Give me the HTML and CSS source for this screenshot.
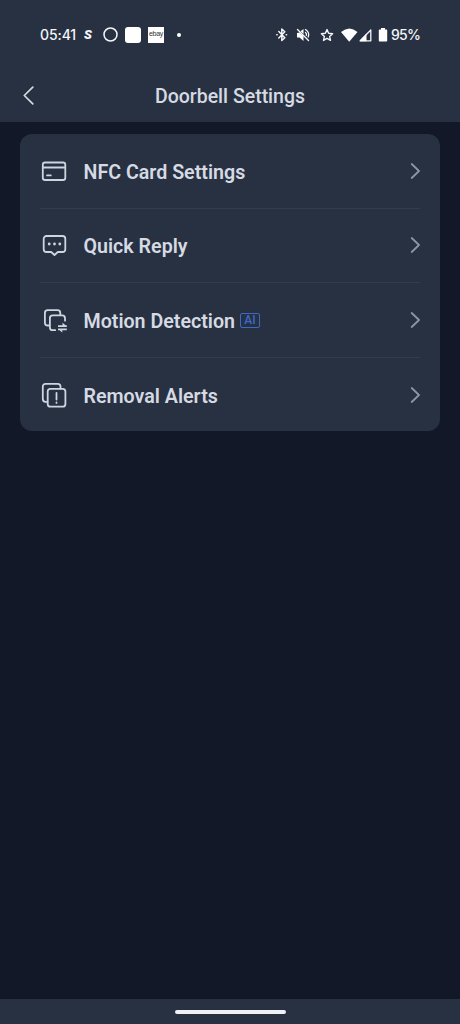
FILE: index.html
```html
<!DOCTYPE html>
<html lang="en">
<head>
<meta charset="utf-8">
<title>Doorbell Settings</title>
<link rel="stylesheet" href="styles.css">
</head>
<body>
<div class="screen">
  <header class="top">
    <div class="status">
      <span class="clock">05:41</span>
      <span class="letter">S</span>
      <svg class="ring" width="15" height="15" viewBox="0 0 15 15"><circle cx="7.5" cy="7.5" r="6.5" stroke-width="1.5"/></svg>
      <span class="tile"></span>
      <span class="tile ebay">ebay</span>
      <span class="dot"></span>
      <svg class="sys" width="110" height="18" viewBox="0 0 110 18">
        <path d="M3.800 5.500l6 6.200-3 2.800V3l3 2.800-6 6.200M1.800 8.800h.4M11.200 8.800h.4" stroke-width="1.500"/>
        <path d="M22.500 3.500l11 11" stroke-width="1.400"/>
        <path class="solid" d="M22 7v4.500h2.500l4 3.500v-5L24.500 6.500zM25.500 5.300l3-2.300v5z"/>
        <path d="M30.500 6.500q1.300 1 .9 2.800M30.500 3.500q4.500 3 2.700 7.500" stroke-width="1.300"/>
        <path d="M52 3.600l1.600 3.700 4 .4-3 2.700.9 4-3.500-2.100-3.500 2.100.9-4-3-2.700 4-.4z" stroke-width="1.400"/>
        <path class="solid" d="M66 6q8.500-7 16.500 0L74.200 15.800z"/>
        <path d="M85.200 14.800H95.800V4z" stroke-width="1.300"/>
        <path class="solid" d="M84.500 15.300h7V7.500z"/>
        <path class="solid" d="M103.800 4.200q0-.7.700-.7h1.500V2h4v1.500h1.500q.7 0 .7.700v10.600q0 .7-.7.700h-7q-.7 0-.7-.7z"/>
      </svg>
      <span class="percent">95%</span>
    </div>
    <div class="nav">
      <svg class="back" width="12" height="20" viewBox="0 0 12 20"><path d="M10.800 1.200L2.300 9.500l8.500 8.300"/></svg>
      <h1>Doorbell Settings</h1>
    </div>
  </header>
  <main class="card">
    <div class="row">
      <svg class="icon" width="28" height="28" viewBox="0 0 28 28"><rect x="2.800" y="5.500" width="22.500" height="17.500" rx="2.300"/><path d="M3 10.500h22M7 18.400h3.800"/></svg>
      <span class="label">NFC Card Settings</span>
      <svg class="chev" width="12" height="18" viewBox="0 0 12 18"><path d="M3.700 2l7.300 7-7.300 7"/></svg>
    </div>
    <div class="row">
      <svg class="icon" width="28" height="28" viewBox="0 0 28 28"><path d="M6.500 5h16a2.800 2.800 0 0 1 2.800 2.800v10.400a2.800 2.800 0 0 1-2.800 2.800h-4.700l-3.300 3-3.300-3H6.500a2.800 2.800 0 0 1-2.800-2.800V7.800A2.800 2.800 0 0 1 6.500 5z"/><g class="fill"><circle cx="9.200" cy="13" r="1.400"/><circle cx="14.500" cy="13" r="1.400"/><circle cx="19.800" cy="13" r="1.400"/></g></svg>
      <span class="label">Quick Reply</span>
      <svg class="chev" width="12" height="18" viewBox="0 0 12 18"><path d="M3.700 2l7.300 7-7.300 7"/></svg>
    </div>
    <div class="row">
      <svg class="icon" width="28" height="28" viewBox="0 0 28 28"><path d="M9.500 19.500H7.700a2.800 2.800 0 0 1-2.800-2.800V7a2.800 2.800 0 0 1 2.800-2.800h9.800a2.800 2.800 0 0 1 2.800 2.800v2M15.200 24.200h-2.500a2.800 2.800 0 0 1-2.800-2.800V12.200a2.800 2.800 0 0 1 2.800-2.800h9.500a2.800 2.800 0 0 1 2.800 2.800v2.500"/><path class="fill" d="M18 19.200h8.800v1.700H18zM22.500 16.800l4 3.300h-4zM18 22.500h8.800v1.700H18zM18.300 23.200h4v3.300z"/></svg>
      <span class="label">Motion Detection</span><span class="ai">AI</span>
      <svg class="chev" width="12" height="18" viewBox="0 0 12 18"><path d="M3.700 2l7.300 7-7.300 7"/></svg>
    </div>
    <div class="row">
      <svg class="icon" width="28" height="28" viewBox="0 0 28 28"><path d="M7.500 20.800H5.500a2.700 2.700 0 0 1-2.700-2.700V5.600a2.700 2.700 0 0 1 2.700-2.700h12.300a2.700 2.700 0 0 1 2.700 2.700v2"/><rect x="7.700" y="7.900" width="17.700" height="17.700" rx="2.700"/><path d="M16.500 12v6.500M16.500 21.500v.4"/></svg>
      <span class="label">Removal Alerts</span>
      <svg class="chev" width="12" height="18" viewBox="0 0 12 18"><path d="M3.700 2l7.300 7-7.300 7"/></svg>
    </div>
  </main>
  <footer class="gesture"><span class="pill"></span></footer>
</div>
</body>
</html>
```
FILE: styles.css
```css
* { box-sizing: border-box; }
body { margin: 0; background: #121827; font-family: Roboto, sans-serif; color: #d6dae2; }
svg { flex: none; fill: none; stroke-linecap: round; stroke-linejoin: round; }
.screen { width: 460px; height: 1024px; display: flex; flex-direction: column; }
.top { height: 122px; background: #273142; }
.status { height: 69px; padding-left: 40px; display: flex; align-items: center; color: #f4f6fa; }
.clock, .percent { font: 500 14px Inter, sans-serif; white-space: nowrap; }
.clock { width: 43px; letter-spacing: -.1px; }
.letter { width: 20px; padding-left: 1px; font: italic 900 13px Roboto, sans-serif; }
.ring { stroke: #f4f6fa; margin-right: 7px; }
.tile { width: 16px; height: 16px; border-radius: 3px; background: #fff; margin-right: 7px; }
.ebay { border-radius: 0; margin-right: 13px; color: #333; font: 400 7px/14px "Liberation Sans", sans-serif; text-align: center; letter-spacing: -.3px; }
.dot { width: 4px; height: 4px; border-radius: 50%; background: #fff; }
.sys { margin-left: 94px; stroke: #f4f6fa; overflow: visible; }
.sys .solid { fill: #fff; stroke: none; }
.percent { margin-left: 6px; letter-spacing: -.7px; }
.nav { height: 53px; padding-top: 1px; display: grid; grid-template-columns: 60px 1fr 60px; align-items: center; }
.back { margin-left: 22px; stroke: #d6dae2; stroke-width: 1.7; }
.nav h1 { margin: 0; padding-top: 1px; text-align: center; font-size: 19.500px; font-weight: 500; line-height: 24px; }
.card { height: 297px; margin: 12px 20px 0; padding: 0 20px; border-radius: 12px; background: #273142; }
.row { height: 74.500px; display: flex; align-items: center; border-bottom: 1px solid #323d4e; }
.row:last-child { border-bottom: 0; }
.icon { stroke: #ced5df; stroke-width: 1.800; }
.icon .fill { fill: #ced5df; stroke: none; }
.label { margin-left: 15.500px; padding-top: 3px; font-size: 19.650px; font-weight: 600; white-space: nowrap; }
.ai { width: 20px; height: 15px; margin: 1px 0 0 5px; border: 1.500px solid #3c69c6; border-radius: 2px; color: #3c69c6; font: 500 12px/13px Roboto, sans-serif; text-align: center; }
.chev { margin-left: auto; stroke: #8e95a3; stroke-width: 1.800; }
.gesture { height: 25px; margin-top: auto; background: #273142; display: flex; justify-content: center; }
.pill { width: 111px; height: 4px; margin-top: 10.500px; border-radius: 2px; background: #f0f1f7; }
```
